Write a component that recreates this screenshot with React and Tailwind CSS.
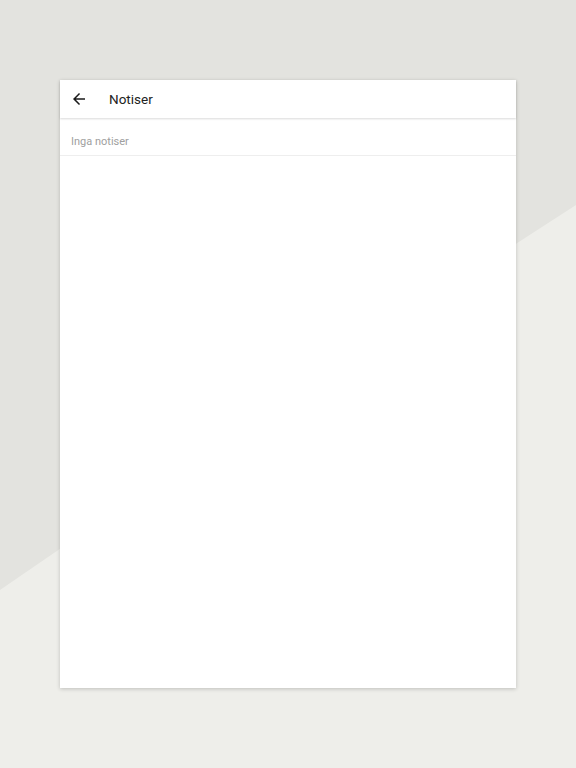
import React from 'react';

const BackArrow = () => (
  <svg width="18" height="18" viewBox="0 0 24 24" fill="currentColor">
    <path d="M20 11H7.83l5.59-5.59L12 4l-8 8 8 8 1.41-1.41L7.83 13H20v-2z" />
  </svg>
);

const App = () => {
  return (
    <div
      className="relative w-[576px] h-[768px] overflow-hidden bg-[#eeeeea]"
      style={{ fontFamily: 'Roboto, "Noto Sans", sans-serif' }}
    >
      {/* background shape */}
      <svg className="absolute inset-0" width="576" height="768" viewBox="0 0 576 768">
        <path d="M0 0 H576 V205 Q320 370 0 590 Z" fill="#e3e3df" />
      </svg>

      <div className="relative pt-20 flex justify-center">
        <div className="w-[456px] h-[608px] bg-white shadow-[0_1px_4px_rgba(0,0,0,0.2)] flex flex-col">
          <div className="h-[38px] flex items-center pl-[10px] shadow-[0_1px_2px_rgba(0,0,0,0.15)] relative z-10">
            <span className="text-[#1a1a1a]">
              <BackArrow />
            </span>
            <span className="ml-[21px] text-[13.5px] text-[#222222]">Notiser</span>
          </div>
          <div className="h-[38px] flex items-center pt-[11px] px-[11px] border-b border-[#eeeeee]">
            <span className="text-[11px] text-[#a0a0a0]">Inga notiser</span>
          </div>
        </div>
      </div>
    </div>
  );
};

export default App;
